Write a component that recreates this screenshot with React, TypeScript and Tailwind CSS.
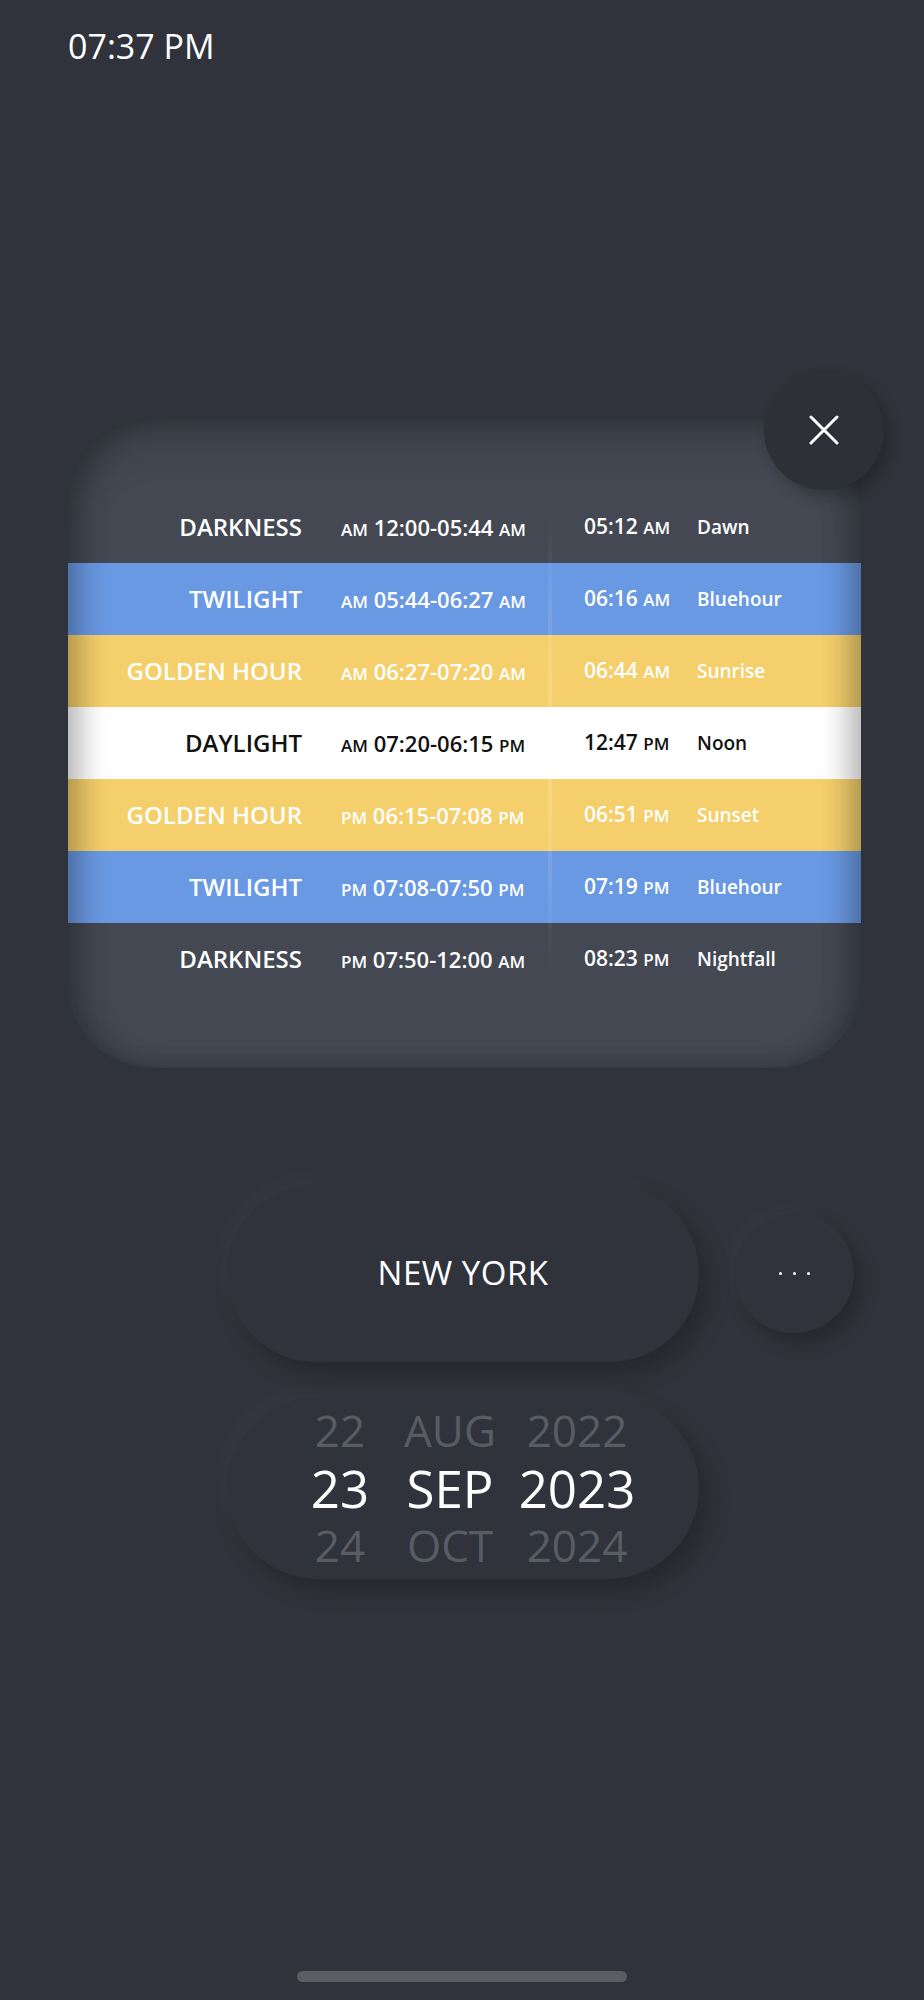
import React from "react";

type Row = {
  name: string;
  from: [string, string];
  toSuffix: string;
  at: string;
  atSuffix: string;
  event: string;
  tone: "dark" | "blue" | "gold" | "light";
};

const rows: Row[] = [
  { name: "DARKNESS", from: ["AM", "12:00-05:44"], toSuffix: "AM", at: "05:12", atSuffix: "AM", event: "Dawn", tone: "dark" },
  { name: "TWILIGHT", from: ["AM", "05:44-06:27"], toSuffix: "AM", at: "06:16", atSuffix: "AM", event: "Bluehour", tone: "blue" },
  { name: "GOLDEN HOUR", from: ["AM", "06:27-07:20"], toSuffix: "AM", at: "06:44", atSuffix: "AM", event: "Sunrise", tone: "gold" },
  { name: "DAYLIGHT", from: ["AM", "07:20-06:15"], toSuffix: "PM", at: "12:47", atSuffix: "PM", event: "Noon", tone: "light" },
  { name: "GOLDEN HOUR", from: ["PM", "06:15-07:08"], toSuffix: "PM", at: "06:51", atSuffix: "PM", event: "Sunset", tone: "gold" },
  { name: "TWILIGHT", from: ["PM", "07:08-07:50"], toSuffix: "PM", at: "07:19", atSuffix: "PM", event: "Bluehour", tone: "blue" },
  { name: "DARKNESS", from: ["PM", "07:50-12:00"], toSuffix: "AM", at: "08:23", atSuffix: "PM", event: "Nightfall", tone: "dark" },
];

const toneClass: Record<Row["tone"], string> = {
  dark: "text-white",
  blue: "bg-[#6a99e3] text-white",
  gold: "bg-[#f5cf6b] text-white",
  light: "bg-white text-[#111]",
};

function PhaseRow({ row }: { row: Row }) {
  return (
    <div className={`flex h-[72px] items-center ${toneClass[row.tone]}`}>
      <div className="w-[234px] text-right text-[24px] font-semibold">{row.name}</div>
      <div className="ml-[39px] w-[243px] text-[22px] font-semibold">
        <span className="text-[17px]">{row.from[0]}</span> {row.from[1]}{" "}
        <span className="text-[17px]">{row.toSuffix}</span>
      </div>
      <div className="w-[113px] text-[21px] font-semibold">
        {row.at} <span className="text-[17px]">{row.atSuffix}</span>
      </div>
      <div className="text-[19px] font-semibold">{row.event}</div>
    </div>
  );
}

export default function App() {
  return (
    <div className="flex h-[2000px] w-[924px] flex-col bg-[#30333b] font-['Open_Sans',sans-serif] text-white">
      {/* Status bar */}
      <div className="pl-[68px] pt-[29px] text-[34px] leading-none">07:37 PM</div>

      {/* Phases card */}
      <div className="relative ml-[68px] mt-[355px] w-[793px]">
        <div className="overflow-hidden rounded-[84px] bg-[#434852] py-[73px]">
          {rows.map((r, i) => (
            <PhaseRow key={i} row={r} />
          ))}
        </div>
        <div className="pointer-events-none absolute inset-0 rounded-[84px] shadow-[inset_0_24px_40px_rgba(0,0,0,0.16),inset_18px_0_28px_-6px_rgba(0,0,0,0.22),inset_-18px_0_28px_-6px_rgba(0,0,0,0.22)]" />
        <div className="pointer-events-none absolute left-[480px] top-[99px] h-[453px] w-[4px] bg-gradient-to-b from-transparent via-white/20 to-transparent" />
        <button className="absolute -top-[48px] left-[696px] flex h-[120px] w-[120px] items-center justify-center rounded-full bg-[#2d3037] shadow-[6px_8px_14px_rgba(0,0,0,0.22)]">
          <svg width="30" height="30" viewBox="0 0 30 30" fill="none" stroke="white" strokeWidth="3" strokeLinecap="round">
            <path d="M2 2L28 28M28 2L2 28" />
          </svg>
        </button>
      </div>

      {/* Location */}
      <div className="ml-[227px] mt-[116px] flex items-center gap-[35px]">
        <div className="flex h-[178px] w-[472px] items-center justify-center rounded-full bg-[#30333b] text-[33px] tracking-[0.5px] shadow-[10px_12px_22px_rgba(0,0,0,0.22),-8px_-8px_18px_rgba(255,255,255,0.025)]">
          NEW YORK
        </div>
        <div className="flex h-[120px] w-[120px] items-center justify-center gap-[11px] rounded-full bg-[#30333b] shadow-[8px_10px_18px_rgba(0,0,0,0.22),-6px_-6px_14px_rgba(255,255,255,0.025)]">
          <span className="h-[3px] w-[3px] rounded-full bg-white" />
          <span className="h-[3px] w-[3px] rounded-full bg-white" />
          <span className="h-[3px] w-[3px] rounded-full bg-white" />
        </div>
      </div>

      {/* Date picker */}
      <div className="ml-[227px] mt-[35px] flex h-[182px] w-[472px] items-center rounded-full bg-[#30333b] pl-[73px] shadow-[10px_12px_22px_rgba(0,0,0,0.22),-8px_-8px_18px_rgba(255,255,255,0.025)]">
        <div className="flex w-[80px] flex-col items-center">
          <span className="h-[57px] text-[44px] leading-[57px] text-[#585c63]">22</span>
          <span className="h-[58px] text-[51px] leading-[58px]">23</span>
          <span className="h-[57px] text-[44px] leading-[57px] text-[#585c63]">24</span>
        </div>
        <div className="ml-[10px] flex w-[120px] flex-col items-center">
          <span className="h-[57px] text-[44px] leading-[57px] text-[#585c63]">AUG</span>
          <span className="h-[58px] text-[51px] leading-[58px]">SEP</span>
          <span className="h-[57px] text-[44px] leading-[57px] text-[#585c63]">OCT</span>
        </div>
        <div className="flex w-[134px] flex-col items-center">
          <span className="h-[57px] text-[44px] leading-[57px] text-[#585c63]">2022</span>
          <span className="h-[58px] text-[51px] leading-[58px]">2023</span>
          <span className="h-[57px] text-[44px] leading-[57px] text-[#585c63]">2024</span>
        </div>
      </div>

      {/* Home indicator */}
      <div className="mt-auto mb-[18px] ml-[297px] h-[11px] w-[330px] rounded-full bg-[#5a5d64]" />
    </div>
  );
}
